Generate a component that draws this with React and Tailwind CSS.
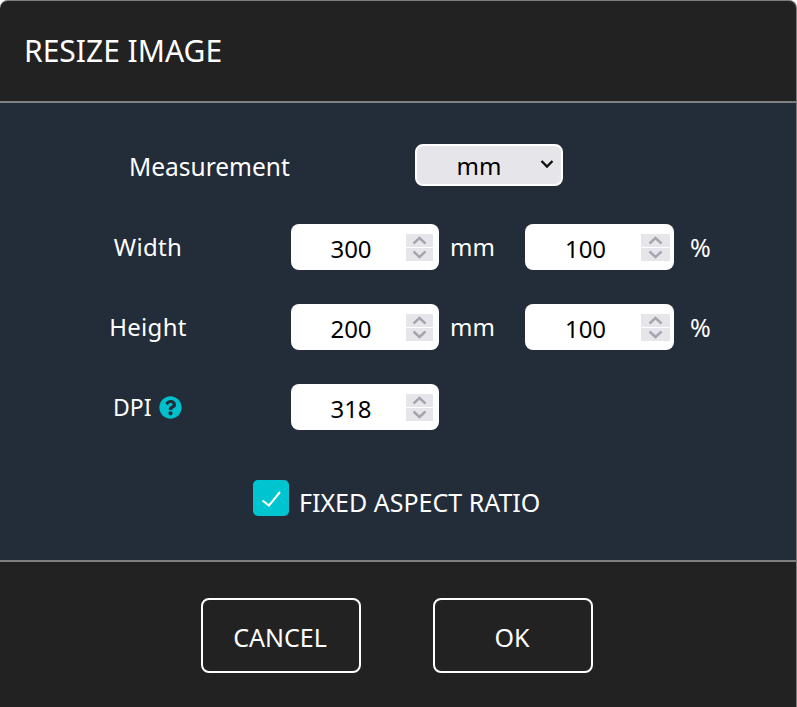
import { FaQuestionCircle } from "react-icons/fa";

const FONT = "font-['Noto_Sans','Open_Sans',sans-serif]";

function Spinner({ wide }) {
  return (
    <div className={`absolute top-[10px] flex flex-col gap-px ${wide ? "right-[4px] w-[29px]" : "right-[6px] w-[27px]"}`}>
      <div className="flex h-[13px] items-center justify-center bg-[#e6e6ea]">
        <svg className="h-[9px] w-[15px]" fill="none" stroke="#a5a5ad" strokeWidth="2.4" viewBox="0 0 15 9">
          <path d="M1.5 7.5 7.5 2 13.5 7.5" />
        </svg>
      </div>
      <div className="flex h-[13px] items-center justify-center bg-[#e6e6ea]">
        <svg className="h-[9px] w-[15px]" fill="none" stroke="#a5a5ad" strokeWidth="2.4" viewBox="0 0 15 9">
          <path d="M1.5 1.5 7.5 7 13.5 1.5" />
        </svg>
      </div>
    </div>
  );
}

function NumberField({ value, wide }) {
  return (
    <div className={`relative h-[46px] shrink-0 ${wide ? "w-[149px]" : "w-[148px]"}`}>
      <input
        className="h-full w-full rounded-[8px] bg-white pt-[2px] pr-[28px] text-center text-[24px] text-black outline-none"
        readOnly
        type="text"
        value={value}
      />
      <Spinner wide={wide} />
    </div>
  );
}

function SizeRow({ label, value }) {
  return (
    <div className="flex h-[46px] items-center">
      <div className="w-[291px] pl-[58px]">
        <span className="inline-block w-[180px] text-center tracking-[0.3px]">{label}</span>
      </div>
      <NumberField value={value} />
      <span className="ml-[11px] w-[75px]">mm</span>
      <NumberField value="100" wide />
      <span className="ml-[16px] text-[25px]">%</span>
    </div>
  );
}

export default function App() {
  return (
    <div className={`${FONT} flex h-[707px] w-[797px] flex-col overflow-hidden rounded-t-[8px] border-t border-r border-[#7c7c7c] bg-[#222222] text-[24px] leading-[32px] text-white`}>
      <header className="flex h-[100px] items-center pl-[24px] text-[30px]">RESIZE IMAGE</header>

      <main className="flex h-[461px] flex-col border-y-2 border-[#808080] bg-[#232c39] pt-[41px]">
        <div className="flex h-[42px] items-center">
          <span className="ml-[129px] mt-[3px] w-[286px] text-[24.5px]">Measurement</span>
          <div className="relative h-[42px] w-[148px]">
            <select className="h-full w-full appearance-none rounded-[8px] border-2 border-white bg-[#e6e6ea] pt-[2px] pr-[20px] text-center text-[24px] text-black outline-none">
              <option>mm</option>
            </select>
            <svg className="pointer-events-none absolute right-[9px] top-[15px] h-[10px] w-[14px]" fill="none" stroke="#111111" strokeWidth="2.4" viewBox="0 0 14 10">
              <path d="M1.5 2 7 7.5 12.5 2" />
            </svg>
          </div>
        </div>

        <div className="mt-[38px] flex flex-col gap-[34px]">
          <SizeRow label="Width" value="300" />
          <SizeRow label="Height" value="200" />
          <div className="flex h-[46px] items-center">
            <div className="flex w-[291px] items-center pl-[113px]">
              <span className="text-[23px]">DPI</span>
              <FaQuestionCircle className="ml-[7px] h-[23px] w-[23px] text-[#00bfcd]" />
            </div>
            <NumberField value="318" />
          </div>
        </div>

        <div className="mt-[50px] flex items-start pl-[253px]">
          <div className="flex h-[36px] w-[36px] items-center justify-center rounded-[5px] bg-[#00c4d0]">
            <svg className="h-[18px] w-[20px]" fill="none" stroke="#ffffff" strokeWidth="2" viewBox="0 0 20 18">
              <path d="M1.5 11.5 8 16.5 19 3" />
            </svg>
          </div>
          <span className="ml-[10px] mt-[6px] text-[25px]">FIXED ASPECT RATIO</span>
        </div>
      </main>

      <footer className="flex flex-1 gap-[72px] pl-[201px] pt-[36px] text-[25px]">
        <button className="h-[75px] w-[160px] rounded-[8px] border-2 border-white pt-[2px] pr-[2px]" type="button">CANCEL</button>
        <button className="h-[75px] w-[160px] rounded-[8px] border-2 border-white pt-[2px] pr-[2px]" type="button">OK</button>
      </footer>
    </div>
  );
}
